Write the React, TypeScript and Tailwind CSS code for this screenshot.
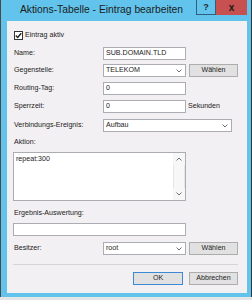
const Chevron = ({ up = false }: { up?: boolean }) => (
  <svg width="6" height="4" viewBox="0 0 6 4" className={up ? "rotate-180" : ""}>
    <path d="M0.5 0.5 L3 3 L5.5 0.5" stroke="#707070" strokeWidth="1" fill="none" />
  </svg>
);

function TextBox({ value = "", className = "" }: { value?: string; className?: string }) {
  return (
    <div className={`flex h-[13px] items-center border border-[#abadb3] bg-white pl-[2px] ${className}`}>
      {value}
    </div>
  );
}

function Select({ value, className = "" }: { value: string; className?: string }) {
  return (
    <div className={`flex h-[13px] items-center justify-between border border-[#abadb3] bg-white pl-[2px] pr-[3px] ${className}`}>
      <span>{value}</span>
      <Chevron />
    </div>
  );
}

function Button({ label, primary = false, className = "" }: { label: string; primary?: boolean; className?: string }) {
  return (
    <div
      className={`flex h-[13px] items-center justify-center border bg-[#e1e1e1] ${
        primary ? "border-[#3c8ad6]" : "border-[#adadad]"
      } ${className}`}
    >
      {label}
    </div>
  );
}

function Row({ label, children, className = "" }: { label: string; children: React.ReactNode; className?: string }) {
  return (
    <div className={`flex h-[13px] items-center ${className}`}>
      <span className="w-[90px] shrink-0 pl-[1px]">{label}</span>
      {children}
    </div>
  );
}

export default function App() {
  return (
    <div className="flex h-[300px] w-[252px] bg-[#e6e6e6] font-['Liberation_Sans',Arial,sans-serif] text-[7.1px] leading-none text-[#222]">
      <div className="h-[297px] w-[1px] bg-[#4a4a4a]" />
      <div className="flex h-[297px] w-[250px] flex-col bg-[#62c4ec]">
        <div className="flex h-[21px] shrink-0 items-start">
          <div className="flex h-[21px] flex-1 items-center justify-center pl-[6px] text-[10.3px] text-[#1c1c1c]">
            Aktions-Tabelle - Eintrag bearbeiten
          </div>
          <div className="flex h-[15px] w-[20px] items-center justify-center border border-t-0 border-[#2e5f7c] text-[9px] font-bold text-[#1c2a36]">
            ?
          </div>
          <div className="flex h-[15px] w-[31px] items-center justify-center bg-[#c75050] text-[10px] font-bold text-[#1a1a1a]">
            x
          </div>
          <div className="w-[4px]" />
        </div>

        <div className="ml-[6px] mr-[4px] flex h-[272px] flex-col bg-[#f3f0f3] pl-[6px] pr-[9px]">
          <div className="mt-[10px] flex h-[9px] items-center gap-[2px] pl-[1px]">
            <div className="flex h-[9px] w-[9px] items-center justify-center border border-[#333] bg-white">
              <svg width="7" height="7" viewBox="0 0 7 7">
                <path d="M0.8 3.6 L2.7 5.5 L6.2 1.2" stroke="#222" strokeWidth="1.4" fill="none" />
              </svg>
            </div>
            <span>Eintrag aktiv</span>
          </div>

          <Row label="Name:" className="mt-[7px]">
            <TextBox value="SUB.DOMAIN.TLD" className="w-[83px]" />
          </Row>
          <Row label="Gegenstelle:" className="mt-[4px]">
            <Select value="TELEKOM" className="w-[83px]" />
            <Button label="Wählen" className="ml-[3px] w-[49px]" />
          </Row>
          <Row label="Routing-Tag:" className="mt-[5px]">
            <TextBox value="0" className="w-[83px]" />
          </Row>
          <Row label="Sperrzeit:" className="mt-[5px]">
            <TextBox value="0" className="w-[83px]" />
            <span className="ml-[2px]">Sekunden</span>
          </Row>
          <Row label="Verbindungs-Ereignis:" className="mt-[6px]">
            <Select value="Aufbau" className="w-[129px]" />
          </Row>

          <div className="mt-[6px] flex h-[10px] items-center pl-[1px]">Aktion:</div>
          <div className="mt-[4px] flex h-[49px] w-[173px] border border-[#abadb3] bg-white">
            <div className="flex-1 pl-[2px] pt-[3px]">repeat:300</div>
            <div className="flex w-[12px] flex-col bg-[#f7f7f7]">
              <div className="flex h-[12px] items-center justify-center">
                <Chevron up />
              </div>
              <div className="flex-1 border-x border-[#e6e6e6]" />
              <div className="flex h-[12px] items-center justify-center">
                <Chevron />
              </div>
            </div>
          </div>

          <div className="mt-[8px] flex h-[10px] items-center pl-[1px]">Ergebnis-Auswertung:</div>
          <TextBox className="mt-[4px] w-[173px]" />

          <Row label="Besitzer:" className="mt-[6px]">
            <Select value="root" className="w-[83px]" />
            <Button label="Wählen" className="ml-[3px] w-[49px]" />
          </Row>

          <div className="mt-[9px] h-[1px] bg-[#d5d5d5]" />

          <div className="mt-[7px] flex justify-end gap-[6px]">
            <Button label="OK" primary className="w-[50px]" />
            <Button label="Abbrechen" className="w-[49px]" />
          </div>
        </div>
      </div>
      <div className="h-[297px] w-[1px] bg-[#333]" />
    </div>
  );
}
